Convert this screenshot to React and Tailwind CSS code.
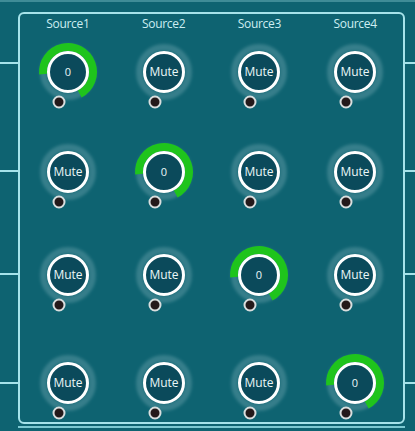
import React from 'react';

const sources = ['Source1', 'Source2', 'Source3', 'Source4'];

// which knob in each row is active (shows "0" with a green level arc)
const rows = [0, 1, 2, 3];
const rowGaps = ['mt-[6px]', 'mt-[28px]', 'mt-[31px]', 'mt-[36px]'];
const gutterGaps = ['mt-[60px]', 'mt-[106px]', 'mt-[101px]', 'mt-[107px]'];

const polar = (cx, cy, r, deg) => {
  const a = ((deg - 90) * Math.PI) / 180;
  return [cx + r * Math.cos(a), cy + r * Math.sin(a)];
};

const arcPath = (cx, cy, r, from, to) => {
  const [x1, y1] = polar(cx, cy, r, from);
  const [x2, y2] = polar(cx, cy, r, to);
  const large = to - from > 180 ? 1 : 0;
  return `M ${x1} ${y1} A ${r} ${r} 0 ${large} 1 ${x2} ${y2}`;
};

const Knob = ({ active }) => {
  const cx = 36;
  const cy = 34;
  return (
    <svg width="72" height="72" viewBox="0 0 72 72" className="block overflow-visible">
      <defs>
        <filter id="soft" x="-30%" y="-30%" width="160%" height="160%">
          <feGaussianBlur stdDeviation="1.8" />
        </filter>
      </defs>
      {/* soft halo */}
      <circle cx={cx} cy={cy} r="24.5" fill="none" stroke="#7fb3ba" strokeOpacity="0.35" strokeWidth="7" filter="url(#soft)" />
      {active && (
        <path d={arcPath(cx, cy, 25, -95, 152)} fill="none" stroke="#1fc41c" strokeWidth="8" />
      )}
      <circle cx={cx} cy={cy} r="19.5" fill="#0b4a5b" stroke="#ffffff" strokeWidth="3" />
      <text
        x={cx}
        y={cy + 4}
        textAnchor="middle"
        fill="#eaf7f8"
        fontSize={active ? 11 : 12}
        fontFamily="'Open Sans', 'Noto Sans', sans-serif"
      >
        {active ? '0' : 'Mute'}
      </text>
      <circle cx={cx - 9} cy={cy + 30} r="5.5" fill="#24191a" stroke="#d9dede" strokeWidth="2" />
    </svg>
  );
};

const Gutter = ({ className }) => (
  <div className={`flex flex-col ${className}`}>
    {gutterGaps.map((g, i) => (
      <div key={i} className={`${g} h-[2px] bg-[#a6e3ea]`} />
    ))}
  </div>
);

export default function App() {
  return (
    <div className="w-[415px] h-[431px] bg-[#0e6371] overflow-hidden flex flex-col">
      <div className="h-[2px] bg-[#3f8c97] shrink-0" />
      <div className="flex flex-1">
        <Gutter className="w-[18px] shrink-0" />
        <div className="flex flex-col">
          <div className="mt-[10px] w-[387px] h-[412px] border-2 border-[#a6e3ea] rounded-[6px] flex flex-col">
            <div className="grid grid-cols-4 mt-[2px] h-[16px]">
              {sources.map((s) => (
                <div
                  key={s}
                  className="text-center text-[12px] leading-[16px] text-[#cdeef2] font-['Open_Sans',sans-serif] tracking-[-0.3px]"
                >
                  {s}
                </div>
              ))}
            </div>
            {rows.map((active, r) => (
              <div key={r} className={`grid grid-cols-4 ${rowGaps[r]}`}>
                {sources.map((s, c) => (
                  <div key={s} className="flex justify-center">
                    <Knob active={c === active} />
                  </div>
                ))}
              </div>
            ))}
          </div>
          <div className="mt-[2px] h-[2px] bg-[#7cc9d2]" />
        </div>
        <Gutter className="flex-1" />
      </div>
    </div>
  );
}
